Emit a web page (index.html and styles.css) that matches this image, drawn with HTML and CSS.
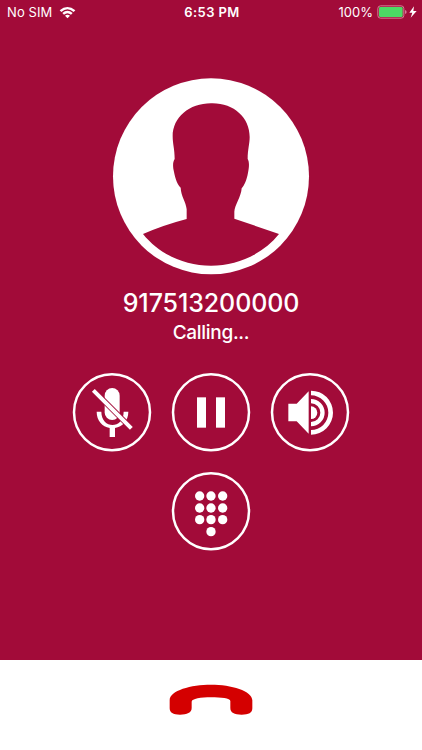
FILE: index.html
```html
<!DOCTYPE html>
<html lang="en">
<head>
<meta charset="utf-8">
<title>Calling</title>
<link rel="stylesheet" href="styles.css">
</head>
<body>
<main class="screen">
  <header class="status">
    <div class="carrier"><span class="carrier-name">No SIM</span>
      <svg class="wifi" viewBox="0 0 51 39"><path d="M2 13Q25 -7 49 13L44 18Q25 2 7 18Z"/><path d="M10 21Q25 8 41 21L36 26Q25 17 15 26Z"/><path d="M18 29Q25 23 33 29L25.500 37Z"/></svg>
    </div>
    <span class="time">6:53 PM</span>
    <div class="power"><span class="percent">100%</span>
      <svg class="battery" viewBox="0 0 120 42"><rect class="case" x="2.500" y="2.500" width="78" height="37" rx="8"/><rect class="charge" x="6" y="6" width="71" height="30" rx="4"/><path class="cap" d="M84 15Q89 16 89 21Q89 26 84 27Z"/><path class="bolt" d="M111 4L97 23H106L101 38L119 18H109Z"/></svg>
    </div>
  </header>
  <section class="caller">
    <svg class="avatar" viewBox="0 0 636 636"><circle class="disc" cx="318" cy="319" r="294"/><path class="person" d="M318 100C385 98 434 142 434 201C434 222 428 238 428 267C434 276 432 294 429 308C425 330 419 344 410 355C409 379 389 405 388 425V446L522 492C473 553 397 587 318 587C239 587 163 553 114 492Q176 465 245 447V418C243 395 228 379 227 353C214 341 209 316 205 296C203 282 205 273 209 267C209 237 203 222 203 199C203 142 253 100 318 100Z"/></svg>
    <h1 class="number">917513200000</h1>
    <p class="state">Calling...</p>
  </section>
  <section class="controls">
    <button class="control" aria-label="Mute"><svg viewBox="0 0 276 270"><circle class="ring" cx="138" cy="133" r="114"/><rect x="116" y="60" width="45" height="96" rx="22.500"/><path d="M92 131H106C106 184 173 184 173 131H187C187 158 169 176 147 180V207H131V180C109 176 92 158 92 131Z"/><path class="gap" d="M82 67L196 181"/><path class="slash" d="M82 67L196 181"/></svg></button>
    <button class="control" aria-label="Hold"><svg viewBox="0 0 276 270"><circle class="ring" cx="138" cy="133" r="114"/><rect x="96" y="88" width="27" height="91"/><rect x="153" y="88" width="27" height="91"/></svg></button>
    <button class="control" aria-label="Speaker"><svg viewBox="0 0 276 270"><circle class="ring" cx="138" cy="133" r="114"/><path d="M73 107H98L134 70V197L98 160H73Z"/><path d="M141 68A66 66 0 0 1 141 200V186A52 52 0 0 0 141 82Z"/><path d="M141 93A41 41 0 0 1 141 175V162A28 28 0 0 0 141 106Z"/><path d="M141 115A19 19 0 0 1 141 153Z"/></svg></button>
    <button class="control keypad" aria-label="Keypad"><svg viewBox="0 0 276 270"><circle class="ring" cx="138" cy="136" r="114"/><circle cx="104" cy="90" r="14"/><circle cx="138" cy="90" r="14"/><circle cx="173" cy="90" r="14"/><circle cx="104" cy="126" r="14"/><circle cx="138" cy="126" r="14"/><circle cx="173" cy="126" r="14"/><circle cx="104" cy="161" r="14"/><circle cx="138" cy="161" r="14"/><circle cx="173" cy="161" r="14"/><circle cx="138" cy="197" r="14"/></svg></button>
  </section>
  <footer class="hangup">
    <svg class="phone" viewBox="0 0 336 240"><path d="M44 151C44 121 108 104 168 104C229 104 292 122 292 151V175C292 189 281 194 260 194C238 194 226 188 226 174V153C226 145 198 142 168 142C138 142 110 146 110 155V174C110 188 96 194 75 194C54 194 44 188 44 175Z"/></svg>
  </footer>
</main>
</body>
</html>
```
FILE: styles.css
```css
* { box-sizing: border-box; }
body { margin: 0; background: #a20b39; color: #fff; font-family: Inter, sans-serif; }
svg { display: block; fill: currentColor; }
.screen { height: 750px; display: flex; flex-direction: column; overflow: hidden; }
.status { flex: none; height: 24px; padding: 0 5px 0 7px; display: grid; grid-template-columns: 1fr auto 1fr; align-items: center; font-size: 13px; line-height: 24px; }
.carrier, .power { display: flex; align-items: center; }
.carrier { gap: 7px; }
.carrier-name { letter-spacing: 0.1px; }
.power { justify-content: flex-end; gap: 4px; }
.wifi { width: 17px; height: 13px; }
.time { font-weight: 600; letter-spacing: 0.4px; }
.battery { width: 40px; height: 14px; }
.case { fill: none; stroke: #d57b97; stroke-width: 3; }
.charge { fill: #4cd964; }
.cap { fill: #d57b97; }
.caller { flex: none; height: 344px; padding-top: 46px; display: flex; flex-direction: column; align-items: center; }
.avatar { width: 212px; height: 212px; flex: none; }
.person { fill: #a20b39; }
.number { margin: 5px 0 0; font-size: 25px; line-height: 32px; font-weight: 500; letter-spacing: -0.1px; }
.state { margin: 0; font-size: 19px; line-height: 28px; font-weight: 500; letter-spacing: -0.3px; }
.controls { flex: none; height: 291.500px; display: grid; grid-template-columns: repeat(3, 92px); grid-template-rows: 90px 90px; gap: 8px 7px; justify-content: center; }
.control { padding: 0; border: 0; background: none; color: inherit; }
.control svg { width: 92px; height: 90px; }
.keypad { grid-column: 2; }
.ring { fill: none; stroke: currentColor; stroke-width: 7.500; }
.slash { stroke: currentColor; stroke-width: 12; }
.gap { stroke: #a20b39; stroke-width: 17; }
.hangup { flex: 1; min-height: 0; background: #fff; color: #d40000; display: flex; justify-content: center; align-items: flex-end; padding-bottom: 20px; }
.phone { flex: none; width: 112px; height: 80px; }
```
